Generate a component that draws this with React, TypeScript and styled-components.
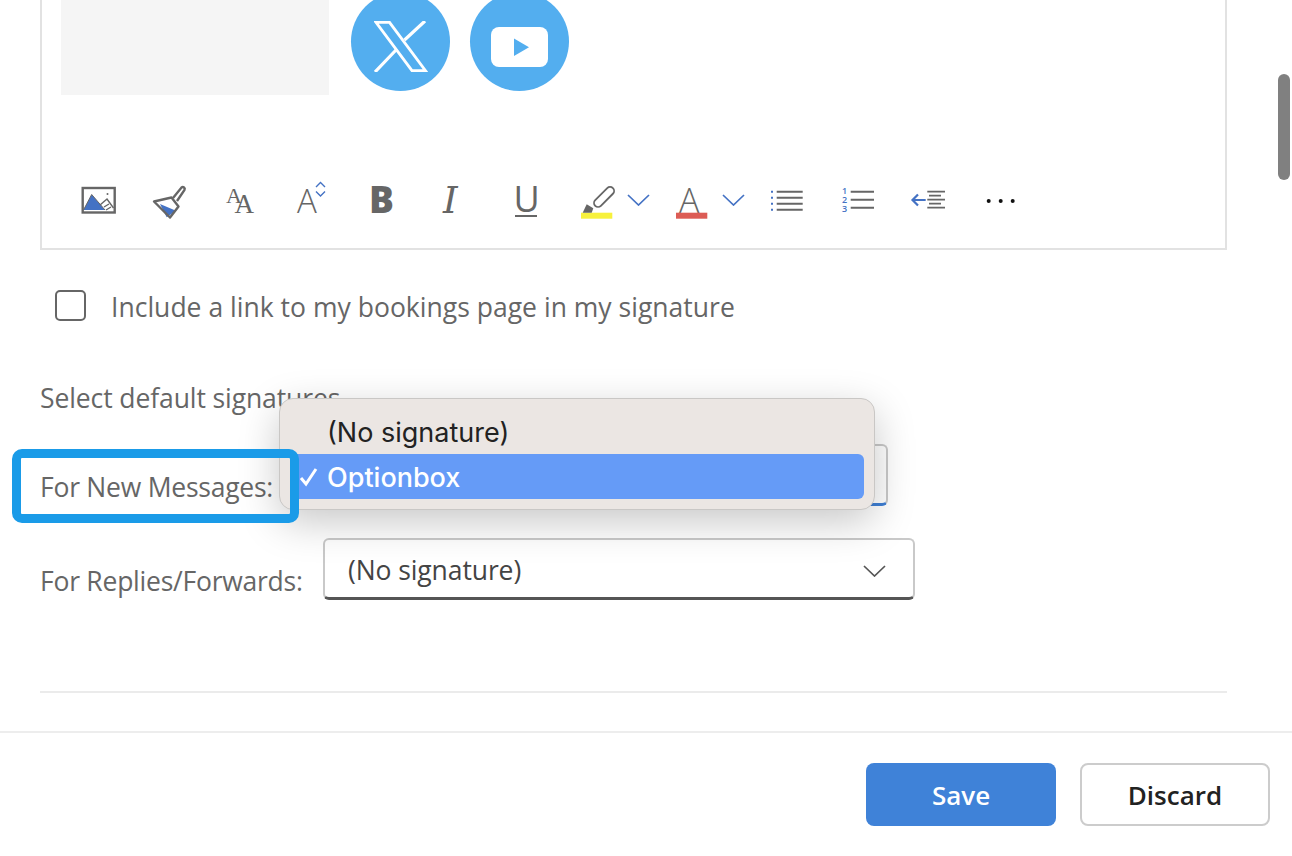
import * as React from "react";
import styled, { createGlobalStyle } from "styled-components";

const GlobalStyle = createGlobalStyle`
  html, body {
    margin: 0;
    padding: 0;
    background: #fff;
  }
  * {
    box-sizing: border-box;
  }
`;

const gray = "#666666";
const blue = "#4472c4";
const sky = "#53aeef";

const Page = styled.div`
  position: relative;
  display: flex;
  flex-direction: column;
  width: 1292px;
  height: 856px;
  overflow: hidden;
  background: #fff;
  font-family: "Open Sans", "Noto Sans", sans-serif;
  font-size: 26.5px;
  color: #666;
`;

const Main = styled.main`
  height: 731px;
  padding: 0 65px 0 40px;
`;

const Editor = styled.section`
  height: 250px;
  padding-left: 19px;
  border: 2px solid #e2e2e2;
  border-top: none;
`;

const SignatureRow = styled.div`
  display: flex;
  align-items: flex-start;
  height: 95px;
`;

const Placeholder = styled.div`
  width: 268px;
  height: 95px;
  margin-right: 22px;
  background: #f5f5f5;
`;

const Social = styled.div`
  display: flex;
  align-items: center;
  justify-content: center;
  width: 99px;
  height: 99px;
  margin: -8px 20px 0 0;
  padding-top: 10px;
  border-radius: 50%;
  background: ${sky};
  flex: none;
`;

const Toolbar = styled.div`
  display: flex;
  margin-top: 85px;
  padding-left: 1.5px;
`;

const ToolCell = styled.div<{ $width: number }>`
  display: flex;
  align-items: center;
  flex: none;
  width: ${p => p.$width}px;
  height: 40px;
  padding-left: 15.5px;
  gap: 11px;
`;

const IconSvg = styled.svg`
  flex: none;
  overflow: visible;
`;

const Glyph = styled.text<{ $font?: string; $weight?: number; $italic?: boolean }>`
  font-family: ${p => p.$font || '"Open Sans"'}, sans-serif;
  font-weight: ${p => p.$weight || 400};
  font-style: ${p => (p.$italic ? "italic" : "normal")};
`;

const CheckRow = styled.label`
  display: flex;
  align-items: center;
  gap: 25px;
  height: 31px;
  margin-top: 40px;
  padding-left: 15px;
`;

const CheckBox = styled.span`
  width: 31px;
  height: 31px;
  border: 2px solid #666;
  border-radius: 5px;
  flex: none;
`;

const CheckText = styled.span`
  margin-top: 3px;
  letter-spacing: 0.02px;
`;

const Heading = styled.div`
  margin-top: 59px;
  height: 36px;
  line-height: 36px;
  letter-spacing: -0.1px;
`;

const SelectRows = styled.div`
  display: flex;
  flex-direction: column;
  gap: 32px;
  margin-top: 28px;
`;

const SelectRow = styled.div`
  display: flex;
  align-items: center;
  gap: 21px;
`;

const RowLabel = styled.span<{ $width: number }>`
  width: ${p => p.$width}px;
  margin-top: 24px;
  line-height: 36px;
  letter-spacing: -0.24px;
  white-space: nowrap;
`;

const Select = styled.div<{ $active?: boolean }>`
  display: flex;
  align-items: center;
  justify-content: space-between;
  width: 592px;
  height: 62px;
  padding: 2px 26px 0 23px;
  border: 2px solid #c9c9c9;
  border-bottom: 3px solid ${p => (p.$active ? "#3f7fd4" : "#555")};
  border-radius: 6px;
  color: #444;
  background: #fff;
  letter-spacing: -0.1px;
`;

const SelectCaret = styled.span`
  display: flex;
  margin-top: 3px;
`;

const Divider = styled.hr`
  margin: 91px 0 0;
  border: none;
  border-top: 2px solid #ebebeb;
`;

const Footer = styled.footer`
  display: flex;
  justify-content: flex-end;
  gap: 24px;
  flex: 1;
  padding: 30px 22px 0 0;
  border-top: 2px solid #ededed;
`;

const Button = styled.button<{ $primary?: boolean }>`
  width: 190px;
  height: 63px;
  border-radius: 8px;
  border: ${p => (p.$primary ? "none" : "2px solid #cccccc")};
  background: ${p => (p.$primary ? "#3f82d8" : "#fff")};
  color: ${p => (p.$primary ? "#fff" : "#222")};
  font-family: "Open Sans", sans-serif;
  font-size: 26px;
  font-weight: 600;
`;

const ScrollThumb = styled.div`
  position: absolute;
  top: 74px;
  left: 1278px;
  width: 12px;
  height: 106px;
  border-radius: 6px;
  background: #808080;
`;

const Menu = styled.div`
  position: absolute;
  top: 398px;
  left: 279px;
  width: 596px;
  height: 112px;
  padding: 10px 10px 0 11px;
  border: 1.5px solid #c9c7c5;
  border-radius: 14px;
  background: #ebe6e3;
  box-shadow: 0 12px 40px rgba(0, 0, 0, 0.22);
  font-family: "Inter", "Liberation Sans", sans-serif;
  font-size: 27px;
  color: #222;
`;

const MenuItem = styled.div<{ $selected?: boolean }>`
  position: relative;
  height: 45px;
  padding-left: 36px;
  line-height: 47px;
  border-radius: 6px;
  background: ${p => (p.$selected ? "#659bf7" : "transparent")};
  color: ${p => (p.$selected ? "#fff" : "#222")};
  font-weight: ${p => (p.$selected ? 500 : 400)};
`;

const Check = styled.svg`
  position: absolute;
  left: 8px;
  top: 13px;
`;

const Callout = styled.div`
  position: absolute;
  top: 449px;
  left: 12px;
  width: 287px;
  height: 74px;
  border: 9.5px solid #1a9be8;
  border-radius: 10px;
`;

function Icon({ children }: { children: React.ReactNode }) {
  return (
    <IconSvg width="40" height="40" viewBox="0 0 40 40" fill="none">
      {children}
    </IconSvg>
  );
}

function Chevron({ color = blue, w = 23 }: { color?: string; w?: number }) {
  return (
    <svg width={w} height="12" viewBox="0 0 23 12" fill="none">
      <path d="M1 1l10.5 10L22 1" stroke={color} strokeWidth="1.7" />
    </svg>
  );
}

// widths are the distance to the next icon, the toolbar isn't quite regular
const tools: { width: number; split?: boolean; icon: React.ReactNode }[] = [
  {
    width: 73,
    icon: (
      <>
        <rect x="4.7" y="8" width="32" height="24.5" stroke={gray} strokeWidth="2.4" />
        <path d="M5.5 30l8.2-15.5L27 30z" fill={blue} />
        <path d="M5.5 30l8.2-15.5L27 30" stroke={gray} strokeWidth="1" />
        <path d="M22 25l7-6 6.5 9M26 27l5-3M28 30l5-3" stroke={gray} strokeWidth="1.4" />
        <circle cx="29.5" cy="14" r="1" fill={gray} />
      </>
    ),
  },
  {
    width: 69,
    icon: (
      <>
        <path d="M9 24l16 6.7-9.3 6.6z" fill={blue} />
        <path d="M3 21.5l17.5-4 7 9L19 37.5z" stroke={gray} strokeWidth="2.4" strokeLinejoin="round" />
        <path d="M22 18l8.5-10.5a2 2 0 0 1 3 2.5L26 21" stroke={gray} strokeWidth="2.4" />
      </>
    ),
  },
  {
    width: 71,
    icon: (
      <Glyph x="6" y="23" fontSize="22" fill={gray} $font='"Liberation Serif"'>
        A
        <tspan x="14.5" y="33" fontSize="27">A</tspan>
      </Glyph>
    ),
  },
  {
    width: 70,
    icon: (
      <>
        <Glyph x="6" y="33" fontSize="33" fill={gray} $weight={300}>A</Glyph>
        <path d="M25 7l4.5-4.5L34 7M25 11.5l4.5 4.5 4.5-4.5" stroke={blue} strokeWidth="1.4" />
      </>
    ),
  },
  {
    width: 73,
    icon: <Glyph x="8" y="33" fontSize="37" fill={gray} $weight={800}>B</Glyph>,
  },
  {
    width: 72,
    icon: <Glyph x="9" y="33" fontSize="37" fill={gray} $font='"DejaVu Serif"' $italic>I</Glyph>,
  },
  {
    width: 70,
    icon: (
      <>
        <Glyph x="7.5" y="32" fontSize="36" fill={gray}>U</Glyph>
        <path d="M9 36h22" stroke={gray} strokeWidth="2" />
      </>
    ),
  },
  {
    width: 95,
    split: true,
    icon: (
      <>
        <rect x="5" y="32.7" width="31.3" height="6" fill="#f7f13c" />
        <rect x="-4" y="-14" width="8" height="25" rx="4" transform="translate(27 18) rotate(45)" fill="#fff" stroke={gray} strokeWidth="1.8" />
        <path d="M6.7 32.7l4-8.4 6.6 4-1.6 4.4z" fill={gray} />
      </>
    ),
  },
  {
    width: 96,
    split: true,
    icon: (
      <>
        <Glyph x="8" y="33" fontSize="34" fill={gray} $weight={300}>A</Glyph>
        <rect x="5" y="32.7" width="31.3" height="6" fill="#dc5c55" />
      </>
    ),
  },
  {
    width: 71,
    icon: (
      <>
        <path d="M9.7 11.7h26M9.7 17.7h26M9.7 23.7h26M9.7 29.7h26" stroke={gray} strokeWidth="2" />
        <path d="M4 11.7h2M4 17.7h2M4 23.7h2M4 29.7h2" stroke={blue} strokeWidth="2" />
      </>
    ),
  },
  {
    width: 71,
    icon: (
      <>
        <path d="M12.7 11.7H36M12.7 19.7H36M12.7 27.7H36" stroke={gray} strokeWidth="2" />
        <Glyph x="4" y="14" fontSize="9" fill={blue} $weight={600}>
          1
          <tspan x="4" y="23">2</tspan>
          <tspan x="4" y="32">3</tspan>
        </Glyph>
      </>
    ),
  },
  {
    width: 71,
    icon: (
      <>
        <path d="M18.3 11.7H36M20 15.7h12M18.3 19.7H36M20 23.7h12M18.3 27.7H36" stroke={gray} strokeWidth="1.8" />
        <path d="M16.7 20H3.5M9 14.5L3.5 20 9 25.5" stroke={blue} strokeWidth="2.2" />
      </>
    ),
  },
  {
    width: 71,
    icon: (
      <>
        <circle cx="8.7" cy="21" r="2" fill="#111" />
        <circle cx="20.7" cy="21" r="2" fill="#111" />
        <circle cx="32.7" cy="21" r="2" fill="#111" />
      </>
    ),
  },
];

export default function App() {
  return (
    <Page>
      <GlobalStyle />
      <Main>
        <Editor>
          <SignatureRow>
            <Placeholder />
            <Social>
              <svg width="54" height="51" viewBox="0 0 54 51" fill="none" stroke="#fff">
                <path d="M2 1.3h13.5l36 48.4H38z" strokeWidth="2.8" />
                <path d="M51 0L30.5 19M1 51l21-22" strokeWidth="3.2" />
              </svg>
            </Social>
            <Social>
              <svg width="57" height="40" viewBox="0 0 57 40">
                <rect width="57" height="40" rx="8" fill="#fff" />
                <path d="M23 11.5v17.5l15-8.7z" fill={sky} />
              </svg>
            </Social>
          </SignatureRow>
          <Toolbar>
            {tools.map((tool, i) => (
              <ToolCell key={i} $width={tool.width}>
                <Icon>{tool.icon}</Icon>
                {tool.split && <Chevron />}
              </ToolCell>
            ))}
          </Toolbar>
        </Editor>

        <CheckRow>
          <CheckBox />
          <CheckText>Include a link to my bookings page in my signature</CheckText>
        </CheckRow>

        <Heading>Select default signatures</Heading>

        <SelectRows>
          <SelectRow>
            <RowLabel $width={235}>For New Messages:</RowLabel>
            <Select $active />
          </SelectRow>
          <SelectRow>
            <RowLabel $width={262}>For Replies/Forwards:</RowLabel>
            <Select>
              (No signature)
              <SelectCaret>
                <Chevron color="#555" w={25} />
              </SelectCaret>
            </Select>
          </SelectRow>
        </SelectRows>

        <Divider />
      </Main>

      <Footer>
        <Button $primary>Save</Button>
        <Button>Discard</Button>
      </Footer>

      <ScrollThumb />

      <Menu>
        <MenuItem>(No signature)</MenuItem>
        <MenuItem $selected>
          <Check width="20" height="20" viewBox="0 0 20 20" fill="none">
            <path d="M2 11l5 6L17 2" stroke="#fff" strokeWidth="3" />
          </Check>
          Optionbox
        </MenuItem>
      </Menu>
      <Callout />
    </Page>
  );
}
